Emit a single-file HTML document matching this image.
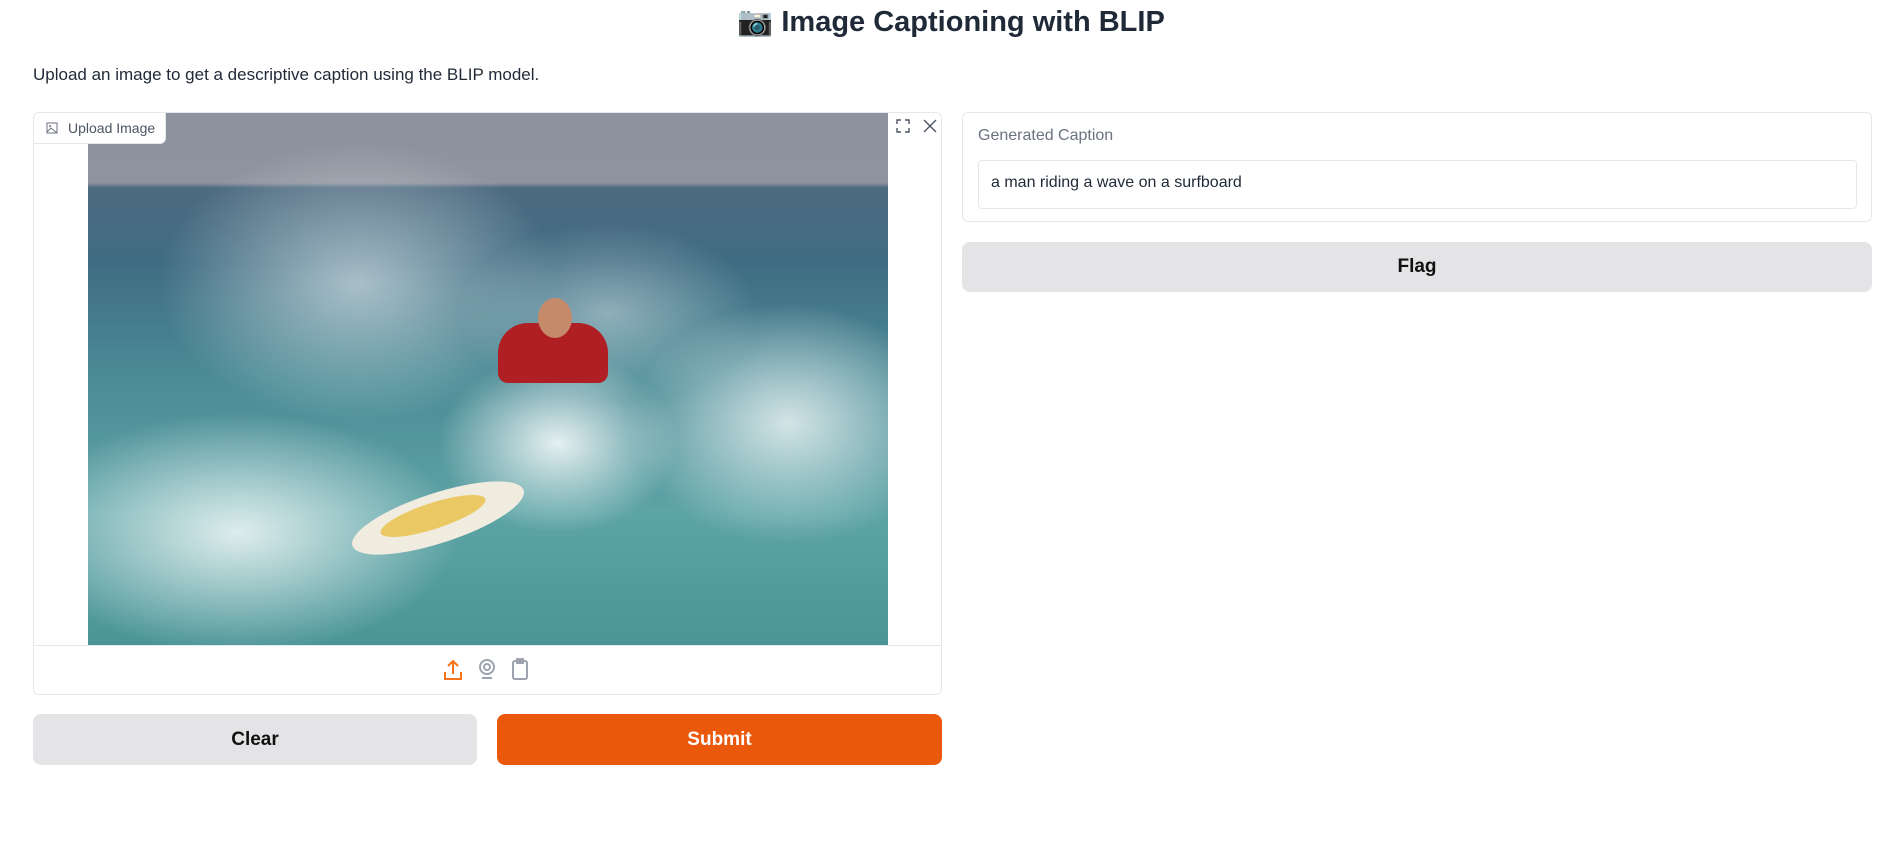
<!DOCTYPE html>
<html><head><meta charset="utf-8"><style>
*{box-sizing:border-box;margin:0;padding:0}
body{width:1902px;height:849px;background:#fff;font-family:"Liberation Sans",sans-serif;color:#1f2937;position:relative;overflow:hidden}
.a{position:absolute}
.btn{position:absolute;border-radius:8px;display:flex;align-items:center;justify-content:center;font-weight:bold;font-size:19px}
</style></head><body>
<div class="a" style="left:0;width:1902px;top:5px;text-align:center;font-size:29px;font-weight:bold;color:#1f2937">📷 Image Captioning with BLIP</div>
<div class="a" style="left:33px;top:65px;font-size:17px;color:#1f2937">Upload an image to get a descriptive caption using the BLIP model.</div>

<div class="a" style="left:33px;top:112px;width:909px;height:583px;border:1px solid #e5e7eb;border-radius:6px;overflow:hidden">
  <div class="a" style="left:54px;top:0;width:800px;height:532px;overflow:hidden;background:
    radial-gradient(ellipse 120px 90px at 470px 330px,rgba(255,255,255,.85),transparent),
    radial-gradient(ellipse 220px 120px at 150px 420px,rgba(255,255,255,.8),transparent),
    radial-gradient(ellipse 160px 120px at 700px 310px,rgba(255,255,255,.75),transparent),
    radial-gradient(ellipse 200px 140px at 270px 170px,rgba(255,255,255,.55),transparent),
    radial-gradient(ellipse 150px 90px at 520px 200px,rgba(255,255,255,.4),transparent),
    linear-gradient(#8d929f 0,#8e939f 70px,#4d6a80 75px,#3f6c82 150px,#4a8a95 260px,#5da4a6 400px,#4b9597 532px)">
    <div class="a" style="left:410px;top:210px;width:110px;height:60px;background:#b01f24;border-radius:30px 30px 10px 10px"></div>
    <div class="a" style="left:450px;top:185px;width:34px;height:40px;background:#c58a6a;border-radius:50%"></div>
    <div class="a" style="left:260px;top:380px;width:180px;height:50px;background:#f0ece0;border-radius:50%;transform:rotate(-18deg)"></div>
    <div class="a" style="left:290px;top:390px;width:110px;height:26px;background:#e9c046;border-radius:50%;transform:rotate(-18deg);opacity:.8"></div>
  </div>
  <div class="a" style="left:0;top:0;width:132px;height:31px;background:#fff;border-right:1px solid #e5e7eb;border-bottom:1px solid #e5e7eb;border-radius:0 0 6px 0;font-size:14px;color:#4b5563;display:flex;align-items:center;padding-left:12px">
    <svg width="12" height="12" viewBox="0 0 12 12" style="margin-right:10px"><rect x="1" y="1" width="10" height="10" fill="none" stroke="#6b7280"/><circle cx="4" cy="4" r="1" fill="#6b7280"/><path d="M1 10 5 6 11 11" fill="none" stroke="#6b7280"/></svg>Upload Image</div>
  <div class="a" style="left:855px;top:0;width:54px;height:26px;background:#fff;border-radius:0 0 0 4px;display:flex;align-items:center;justify-content:space-around;color:#4b5563;font-size:18px">
    <svg width="14" height="14" viewBox="0 0 14 14" fill="none" stroke="#4b5563" stroke-width="1.4"><path d="M1 5V1h4M9 1h4v4M13 9v4H9M5 13H1V9"/></svg>
    <svg width="14" height="14" viewBox="0 0 14 14" stroke="#4b5563" stroke-width="1.4"><path d="M1 1 13 13M13 1 1 13"/></svg>
  </div>
  <div class="a" style="left:0;top:532px;width:909px;height:50px;border-top:1px solid #e5e7eb;background:#fff">
    <svg class="a" style="left:409px;top:13px" width="20" height="22" viewBox="0 0 20 22" fill="none" stroke="#f97316" stroke-width="2"><path d="M10 15V2M5 7l5-5 5 5M2 13v7h16v-7"/></svg>
    <svg class="a" style="left:444px;top:12px" width="18" height="22" viewBox="0 0 18 22" fill="none" stroke="#9ca3af" stroke-width="2"><circle cx="9" cy="9" r="7"/><circle cx="9" cy="9" r="3"/><path d="M4 20h10"/></svg>
    <svg class="a" style="left:477px;top:12px" width="18" height="22" viewBox="0 0 18 22" fill="none" stroke="#9ca3af" stroke-width="2"><rect x="2" y="3" width="14" height="18" rx="2"/><rect x="6" y="1" width="6" height="4"/></svg>
  </div>
</div>

<div class="btn" style="left:33px;top:714px;width:444px;height:51px;background:#e4e4e7;color:#111">Clear</div>
<div class="btn" style="left:497px;top:714px;width:445px;height:51px;background:#ea580c;color:#fff">Submit</div>

<div class="a" style="left:962px;top:112px;width:910px;height:110px;border:1px solid #e5e7eb;border-radius:6px">
  <div class="a" style="left:15px;top:14px;font-size:16px;color:#6b7280">Generated Caption</div>
  <div class="a" style="left:15px;top:47px;width:879px;height:49px;border:1px solid #e5e7eb;border-radius:4px;font-size:16px;color:#1f2937;padding:13px 12px">a man riding a wave on a surfboard</div>
</div>
<div class="btn" style="left:962px;top:242px;width:910px;height:50px;background:#e4e4e7;color:#111">Flag</div>
</body></html>
